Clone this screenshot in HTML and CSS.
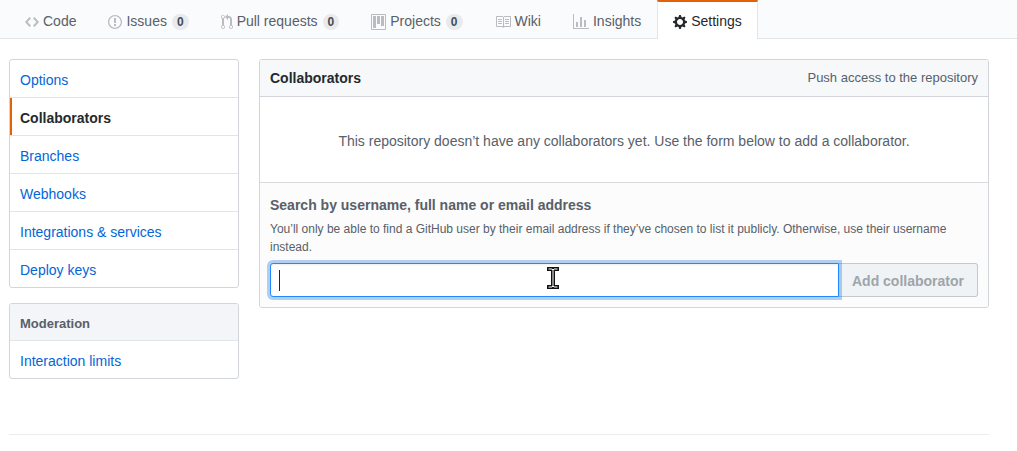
FILE: index.html
```html
<!DOCTYPE html>
<html lang="en">
<head>
<meta charset="utf-8">
<title>Collaborators</title>
<link rel="stylesheet" href="styles.css">
</head>
<body>
<nav class="repo-nav" aria-label="Repository">
  <a class="tab" href="#"><svg class="icon" width="14" height="16" viewBox="0 0 14 16"><path d="M9.5 3L8 4.5 11.5 8 8 11.5 9.5 13 14 8 9.5 3zm-5 0L0 8l4.5 5L6 11.5 2.5 8 6 4.5 4.5 3z"/></svg><span>Code</span></a>
  <a class="tab" href="#"><svg class="icon" width="14" height="16" viewBox="0 0 14 16"><path d="M7 2.3c3.14 0 5.7 2.56 5.7 5.7s-2.56 5.7-5.7 5.7A5.71 5.71 0 0 1 1.3 8c0-3.14 2.56-5.7 5.7-5.7zM7 1C3.14 1 0 4.14 0 8s3.14 7 7 7 7-3.14 7-7-3.14-7-7-7zm1 3H6v5h2V4zm0 6H6v2h2v-2z"/></svg><span>Issues</span><span class="counter">0</span></a>
  <a class="tab" href="#"><svg class="icon" width="12" height="16" viewBox="0 0 12 16"><path d="M11 11.28V5c-.03-.78-.34-1.47-.94-2.06C9.46 2.35 8.78 2.03 8 2H7V0L4 3l3 3V4h1c.27.02.48.11.69.31.21.2.3.42.31.69v6.28A1.993 1.993 0 0 0 10 15a1.993 1.993 0 0 0 1-3.72zm-1 2.92c-.66 0-1.2-.55-1.2-1.2 0-.65.55-1.2 1.2-1.2.65 0 1.2.55 1.2 1.2 0 .65-.55 1.2-1.2 1.2zM4 3c0-1.11-.89-2-2-2a1.993 1.993 0 0 0-1 3.72v6.56A1.993 1.993 0 0 0 2 15a1.993 1.993 0 0 0 1-3.72V4.72c.59-.34 1-.98 1-1.72zm-.8 10c0 .66-.55 1.2-1.2 1.2-.65 0-1.2-.55-1.2-1.2 0-.65.55-1.2 1.2-1.2.65 0 1.2.55 1.2 1.2zM2 4.2C1.34 4.2.8 3.65.8 3c0-.65.55-1.2 1.2-1.2.65 0 1.2.55 1.2 1.2 0 .65-.55 1.2-1.2 1.2z"/></svg><span>Pull requests</span><span class="counter">0</span></a>
  <a class="tab" href="#"><svg class="icon" width="15" height="16" viewBox="0 0 15 16"><path fill-rule="evenodd" d="M10 12h3V2h-3v10zm-4-2h3V2H6v8zm-4 4h3V2H2v12zm-1 1h13V1H1v14zM14 0H1a1 1 0 0 0-1 1v14a1 1 0 0 0 1 1h13a1 1 0 0 0 1-1V1a1 1 0 0 0-1-1z"/></svg><span>Projects</span><span class="counter">0</span></a>
  <a class="tab" href="#"><svg class="icon" width="16" height="16" viewBox="0 0 16 16"><path d="M3 5h4v1H3V5zm0 3h4V7H3v1zm0 2h4V9H3v1zm11-5h-4v1h4V5zm0 2h-4v1h4V7zm0 2h-4v1h4V9zm2-6v9c0 .55-.45 1-1 1H9.5l-1 1-1-1H2c-.55 0-1-.45-1-1V3c0-.55.45-1 1-1h5.5l1 1 1-1H15c.55 0 1 .45 1 1zm-8 .5L7.5 3H2v9h6V3.5zm7-.5H9.5l-.5.5V12h6V3z"/></svg><span>Wiki</span></a>
  <a class="tab" href="#"><svg class="icon" width="16" height="16" viewBox="0 0 16 16"><path d="M16 14v1H0V0h1v14h15zM5 13H3V8h2v5zm4 0H7V3h2v10zm4 0h-2V6h2v7z"/></svg><span>Insights</span></a>
  <a class="tab tab-selected" href="#" aria-current="page"><svg class="icon" width="14" height="16" viewBox="0 0 14 16"><path d="M14 8.77v-1.6l-1.94-.64-.45-1.09.88-1.84-1.13-1.13-1.81.91-1.09-.45-.69-1.92h-1.6l-.63 1.94-1.11.45-1.84-.88-1.13 1.13.91 1.81-.45 1.09L0 7.23v1.59l1.94.64.45 1.09-.88 1.84 1.13 1.13 1.81-.91 1.09.45.69 1.92h1.59l.63-1.94 1.11-.45 1.84.88 1.13-1.13-.92-1.81.47-1.09L14 8.75v.02zM7 11c-1.66 0-3-1.34-3-3s1.34-3 3-3 3 1.34 3 3-1.34 3-3 3z"/></svg><span>Settings</span></a>
</nav>

<div class="page">
  <div class="columns">
    <aside class="sidebar">
      <nav class="menu" aria-label="Settings">
        <a class="menu-item" href="#">Options</a>
        <a class="menu-item menu-item-selected" href="#" aria-current="page">Collaborators</a>
        <a class="menu-item" href="#">Branches</a>
        <a class="menu-item" href="#">Webhooks</a>
        <a class="menu-item" href="#">Integrations &amp; services</a>
        <a class="menu-item" href="#">Deploy keys</a>
      </nav>
      <nav class="menu" aria-labelledby="moderation">
        <h2 class="menu-heading" id="moderation">Moderation</h2>
        <a class="menu-item" href="#">Interaction limits</a>
      </nav>
    </aside>

    <main class="box">
      <header class="box-header">
        <h1 class="box-title">Collaborators</h1>
        <span class="box-hint">Push access to the repository</span>
      </header>
      <p class="blank">This repository doesn’t have any collaborators yet. Use the form below to add a collaborator.</p>
      <form class="add-form">
        <label class="add-label" for="member">Search by username, full name or email address</label>
        <p class="add-note" id="member-note">You’ll only be able to find a GitHub user by their email address if they’ve chosen to list it publicly. Otherwise, use their username instead.</p>
        <div class="add-row">
          <div class="field">
            <input class="field-input" id="member" type="text" aria-describedby="member-note">
            <span class="caret"></span>
            <svg class="pointer" width="12" height="24" viewBox="0 0 12 24"><path class="pointer-edge" d="M2 3h3l1 1 1-1h3M2 21h3l1-1 1 1h3M6 4v16"/><path class="pointer-core" d="M2 3h3l1 1 1-1h3M2 21h3l1-1 1 1h3M6 4v16"/></svg>
          </div>
          <button class="add-button" type="submit" disabled>Add collaborator</button>
        </div>
      </form>
    </main>
  </div>
  <hr class="rule">
</div>
</body>
</html>
```
FILE: styles.css
```css
* {
  box-sizing: border-box;
}

body {
  margin: 0;
  background: #fff;
  color: #24292e;
  font: 14px/21px "Liberation Sans", Arial, sans-serif;
}

a {
  color: #0366d6;
  text-decoration: none;
}

.repo-nav {
  display: flex;
  padding-left: 9px;
  background: #fafbfc;
  box-shadow: inset 0 -1px #e1e4e8;
}

.tab {
  display: flex;
  align-items: center;
  gap: 4px;
  padding: 9px 15px 7px;
  border: solid transparent;
  border-width: 2px 1px 0;
  color: #586069;
  white-space: nowrap;
}

.icon {
  fill: currentColor;
  color: #babcbf;
}

.tab-selected {
  border-color: #e36209 #e1e4e8 transparent;
  background: #fff;
  color: #24292e;
}

.tab-selected .icon {
  color: inherit;
}

.counter {
  margin-left: 1px;
  padding: 2px 5px;
  border-radius: 20px;
  background: #e9eaec;
  color: #444d56;
  font-size: 12px;
  font-weight: 700;
  line-height: 12px;
}

.page {
  padding: 20px 28px 16px 9px;
}

.columns {
  display: flex;
  align-items: flex-start;
  gap: 20px;
}

.sidebar {
  display: flex;
  flex: 0 0 230px;
  flex-direction: column;
  gap: 15px;
}

.menu,
.box {
  border: 1px solid #d1d5da;
  border-radius: 3px;
}

.menu-item {
  display: block;
  padding: 10px 10px 6px;
}

.menu-item + .menu-item,
.menu-heading + .menu-item {
  border-top: 1px solid #e1e4e8;
}

.menu-item-selected {
  color: #24292e;
  font-weight: 700;
  box-shadow: inset 2px 0 #e36209;
}

.menu-heading {
  margin: 0;
  padding: 10px 10px 6px;
  border-radius: 2px 2px 0 0;
  background: #f3f5f8;
  color: #586069;
  font-size: 13px;
  line-height: 20px;
}

.box {
  flex: 1;
  min-width: 0;
}

.box-header {
  display: flex;
  align-items: center;
  justify-content: space-between;
  padding: 8px 10px;
  border-bottom: 1px solid #d1d5da;
  border-radius: 2px 2px 0 0;
  background: #f6f8fa;
  line-height: 20px;
}

.box-title {
  margin: 0;
  font-size: 14px;
}

.box-hint {
  color: #586069;
  font-size: 13px;
}

.blank {
  margin: 0;
  padding: 34px 10px 30px;
  color: #586069;
  text-align: center;
}

.add-form {
  padding: 12px 10px 10px;
  border-top: 1px solid #d8dade;
  border-radius: 0 0 2px 2px;
  background: #fcfcfc;
  color: #586069;
}

.add-label {
  display: block;
  margin-bottom: 4px;
  font-weight: 700;
}

.add-note {
  margin: 0 0 7px;
  font-size: 12px;
  line-height: 18px;
}

.add-row {
  display: flex;
}

.field {
  position: relative;
  z-index: 1;
  flex: 1;
}

.field-input {
  display: block;
  width: 100%;
  height: 34px;
  padding: 6px 8px;
  border: 1px solid #2188ff;
  border-radius: 3px 0 0 3px;
  outline: none;
  background: #fff;
  box-shadow: inset 0 1px 2px rgba(27, 31, 35, 0.08), 0 0 0 3px rgba(3, 102, 214, 0.3);
  font: inherit;
}

.caret {
  position: absolute;
  top: 7px;
  left: 9px;
  width: 1px;
  height: 21px;
  background: #24292e;
}

.pointer {
  position: absolute;
  top: 3px;
  left: 277px;
}

.pointer-edge,
.pointer-core {
  fill: none;
  stroke-linecap: square;
}

.pointer-edge {
  stroke: #111;
  stroke-width: 4px;
}

.pointer-core {
  stroke: #fff;
  stroke-width: 1px;
}

.add-button {
  padding: 7px 13px 5px;
  border: 1px solid #c3c8cd;
  border-left: 0;
  border-radius: 0 3px 3px 0;
  background: #eff3f6;
  color: #9fa4a9;
  font: inherit;
  font-weight: 700;
  line-height: 20px;
}

.rule {
  height: 1px;
  margin: 55px 0 0;
  border: 0;
  background: #eaecef;
}
```
